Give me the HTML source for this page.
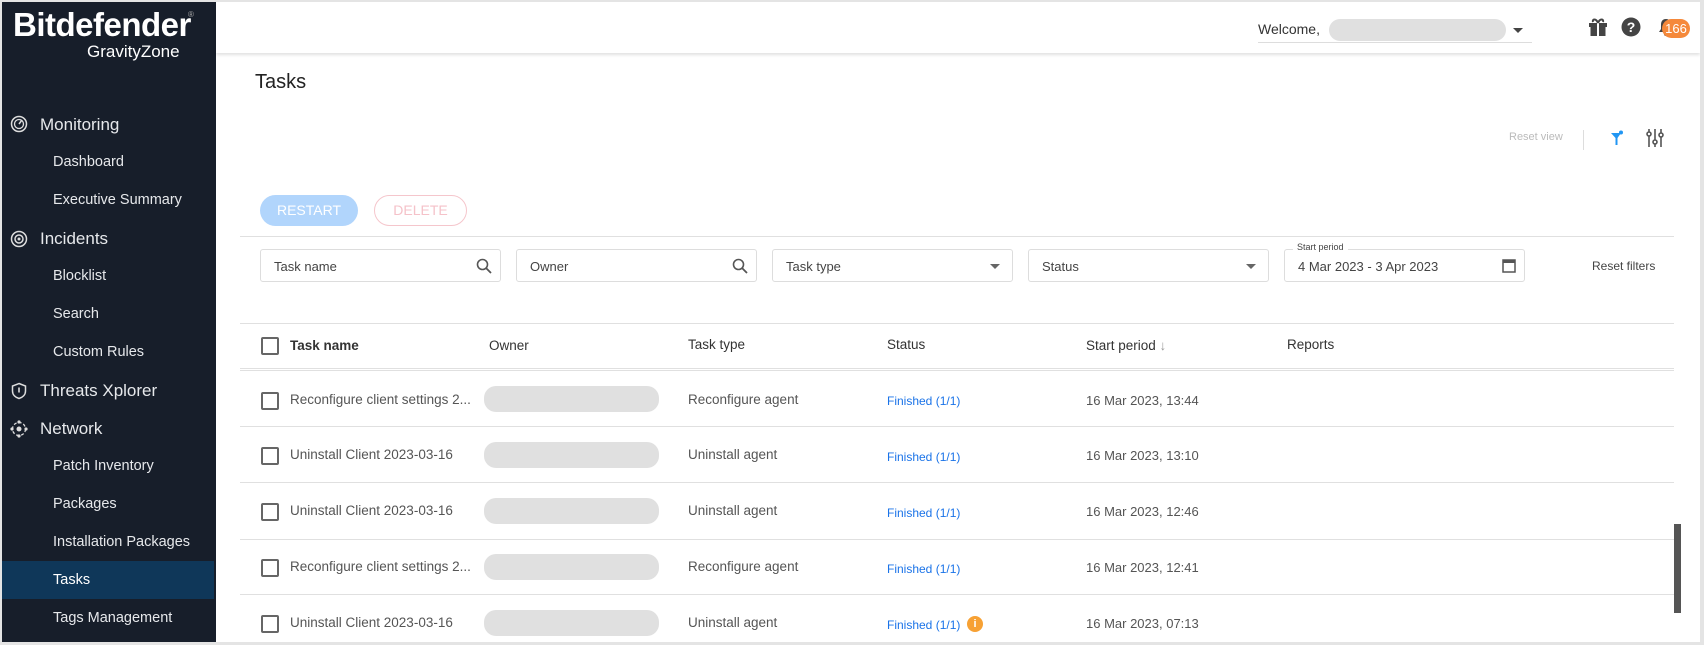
<!DOCTYPE html>
<html><head><meta charset="utf-8"><style>
*{box-sizing:border-box;margin:0;padding:0}
body{width:1704px;height:645px;overflow:hidden;background:#e4e4e4;font-family:"Liberation Sans",sans-serif;position:relative}
.frame{position:absolute;left:2px;top:2px;width:1698px;height:640px;background:#fff;overflow:hidden}
.side{position:absolute;left:0;top:0;width:214px;height:640px;background:#171e2a;color:#e6e8eb}
.abs{position:absolute}
.logo{left:11px;top:4px;font-size:33px;font-weight:bold;color:#fff;letter-spacing:-0.5px}
.gz{left:85px;top:40px;font-size:17px;color:#fff}
.sec{position:absolute;left:38px;font-size:17px;color:#e6e8eb}
.sub{position:absolute;left:51px;font-size:14.5px;color:#e6e8eb}
.ico{position:absolute;left:8px;width:18px;height:18px}
.hl{position:absolute;left:0;top:559px;width:212px;height:38px;background:#0f3759}
.top{position:absolute;left:214px;top:0;right:0;height:51px;background:#fff;box-shadow:0 2px 3px rgba(0,0,0,.12)}
.pill{position:absolute;background:#e0e0e0;border-radius:12px}
.inp{position:absolute;top:247px;height:33px;border:1px solid #ddd;border-radius:3px;font-size:13px;color:#444;padding:9px 13px}
.line{position:absolute;left:238px;width:1434px;height:1px;background:#e0e0e0}
.cb{position:absolute;left:259px;width:18px;height:18px;border:2px solid #666;border-radius:2px}
.cell{position:absolute;font-size:13.5px;color:#555}
.st{position:absolute;left:885px;font-size:12px;color:#1a73e8}
</style></head><body>
<div class="frame">
<div class="side">
 <div class="abs logo">Bitdefender</div><div class="abs" style="left:186px;top:8px;font-size:8px;color:#aaa">®</div>
 <div class="abs gz">GravityZone</div>
 <svg class="ico" style="top:113px" viewBox="0 0 18 18"><circle cx="9" cy="9" r="7.5" fill="none" stroke="#ddd" stroke-width="1.5"/><circle cx="9" cy="9" r="4.5" fill="none" stroke="#ddd" stroke-width="1.3"/><path d="M9 9L12 5" stroke="#ddd" stroke-width="1.5"/></svg>
 <div class="sec" style="top:113px">Monitoring</div>
 <div class="sub" style="top:152px">Dashboard</div>
 <div class="sub" style="top:190px">Executive Summary</div>
 <svg class="ico" style="top:228px" viewBox="0 0 18 18"><circle cx="9" cy="9" r="7.5" fill="none" stroke="#ddd" stroke-width="1.5"/><circle cx="9" cy="9" r="4" fill="none" stroke="#ddd" stroke-width="1.5"/><circle cx="9" cy="9" r="1.5" fill="#ddd"/></svg>
 <div class="sec" style="top:227px">Incidents</div>
 <div class="sub" style="top:266px">Blocklist</div>
 <div class="sub" style="top:304px">Search</div>
 <div class="sub" style="top:342px">Custom Rules</div>
 <svg class="ico" style="top:380px" viewBox="0 0 18 18"><path d="M9 1.5L15.5 4v5c0 4-3 6.5-6.5 7.5C5.5 15.5 2.5 13 2.5 9V4z" fill="none" stroke="#ddd" stroke-width="1.5"/><path d="M9 5.5v5" stroke="#ddd" stroke-width="1.6"/></svg>
 <div class="sec" style="top:379px">Threats Xplorer</div>
 <svg class="ico" style="top:418px" viewBox="0 0 18 18"><circle cx="9" cy="9" r="6.5" fill="none" stroke="#ddd" stroke-width="1.3" stroke-dasharray="3 2"/><circle cx="9" cy="9" r="2.5" fill="#ddd"/><circle cx="9" cy="2" r="1.6" fill="#ddd"/><circle cx="9" cy="16" r="1.6" fill="#ddd"/><circle cx="2" cy="9" r="1.6" fill="#ddd"/><circle cx="16" cy="9" r="1.6" fill="#ddd"/></svg>
 <div class="sec" style="top:417px">Network</div>
 <div class="sub" style="top:456px">Patch Inventory</div>
 <div class="sub" style="top:494px">Packages</div>
 <div class="sub" style="top:532px">Installation Packages</div>
 <div class="hl"></div>
 <div class="sub" style="top:570px;color:#fff">Tasks</div>
 <div class="sub" style="top:608px">Tags Management</div>
</div>
<div class="abs" style="left:208px;top:8px;width:18px;height:36px;background:#171e2a;border-radius:0 12px 12px 0;color:#fff;font-size:12px;text-align:center;line-height:34px">‹</div>
<div class="top">
 <div class="abs" style="left:1042px;top:19px;font-size:14px;color:#333">Welcome,</div>
 <div class="pill" style="left:1113px;top:17px;width:177px;height:22px;border-radius:11px"></div>
 <div class="abs" style="left:1297px;top:26px;width:0;height:0;border-left:5px solid transparent;border-right:5px solid transparent;border-top:5px solid #444"></div>
 <div class="abs" style="left:1042px;top:40px;width:274px;height:1px;background:#ddd"></div>
 <svg class="abs" style="left:1372px;top:15px" width="20" height="20" viewBox="0 0 20 20"><rect x="1" y="6" width="18" height="4" fill="#444"/><rect x="2.5" y="10" width="15" height="9" fill="#444"/><rect x="9" y="6" width="2" height="13" fill="#fff"/><path d="M10 6C8 1 4 2 5 5M10 6c2-5 6-4 5-1" stroke="#444" stroke-width="2" fill="none"/></svg>
 <svg class="abs" style="left:1405px;top:15px" width="20" height="20" viewBox="0 0 20 20"><circle cx="10" cy="10" r="9.5" fill="#444"/><text x="10" y="15" font-size="14" font-weight="bold" fill="#fff" text-anchor="middle" font-family="Liberation Sans">?</text></svg>
 <svg class="abs" style="left:1440px;top:15px" width="20" height="20" viewBox="0 0 20 20"><path d="M10 2c-4 0-5 3-5 6v4l-2 3h14l-2-3V8c0-3-1-6-5-6zM8 17h4a2 2 0 01-4 0z" fill="#444"/></svg>
 <div class="abs" style="left:1446px;top:17px;width:28px;height:19px;background:#f5893b;border-radius:10px;color:#fff;font-size:13px;text-align:center;line-height:19px">166</div>
</div>
<div class="abs" style="left:253px;top:69px;font-size:20px;color:#222">Tasks</div>
<div class="abs" style="left:1507px;top:129px;font-size:11px;color:#bbb">Reset view</div>
<div class="abs" style="left:1581px;top:128px;width:1px;height:20px;background:#ddd"></div>
<svg class="abs" style="left:1608px;top:128px" width="16" height="16" viewBox="0 0 16 16"><path d="M1 3h10l-3.5 5v7h-2V8z" fill="#2196f3"/><circle cx="11" cy="2.5" r="2" fill="#2196f3"/></svg>
<svg class="abs" style="left:1644px;top:126px" width="18" height="20" viewBox="0 0 18 20"><g stroke="#555" stroke-width="1.6" fill="#fff"><path d="M3 1v18M9 1v18M15 1v18"/><circle cx="3" cy="6" r="2"/><circle cx="9" cy="14" r="2"/><circle cx="15" cy="7" r="2"/></g></svg>
<div class="abs" style="left:258px;top:193px;width:98px;height:31px;background:#b1d5fc;border-radius:16px;color:#fff;font-size:14px;text-align:center;line-height:31px">RESTART</div>
<div class="abs" style="left:372px;top:193px;width:93px;height:31px;border:1px solid #f5c6cc;border-radius:16px;color:#f5c2c9;font-size:14px;text-align:center;line-height:29px">DELETE</div>
<div class="line" style="top:234px"></div>
<div class="inp" style="left:258px;width:241px">Task name<svg class="abs" style="right:8px;top:8px" width="16" height="16" viewBox="0 0 16 16"><circle cx="6.5" cy="6.5" r="5" fill="none" stroke="#555" stroke-width="1.6"/><path d="M10 10l5 5" stroke="#555" stroke-width="1.8"/></svg></div>
<div class="inp" style="left:514px;width:241px">Owner<svg class="abs" style="right:8px;top:8px" width="16" height="16" viewBox="0 0 16 16"><circle cx="6.5" cy="6.5" r="5" fill="none" stroke="#555" stroke-width="1.6"/><path d="M10 10l5 5" stroke="#555" stroke-width="1.8"/></svg></div>
<div class="inp" style="left:770px;width:241px">Task type<div class="abs" style="right:12px;top:14px;border-left:5px solid transparent;border-right:5px solid transparent;border-top:5px solid #666"></div></div>
<div class="inp" style="left:1026px;width:241px">Status<div class="abs" style="right:12px;top:14px;border-left:5px solid transparent;border-right:5px solid transparent;border-top:5px solid #666"></div></div>
<div class="inp" style="left:1282px;width:241px">4 Mar 2023 - 3 Apr 2023<svg class="abs" style="right:8px;top:8px" width="14" height="15" viewBox="0 0 14 15"><rect x="1" y="2" width="12" height="12" fill="none" stroke="#555" stroke-width="1.5"/><rect x="1" y="2" width="12" height="3" fill="#555"/></svg></div>
<div class="abs" style="left:1291px;top:240px;background:#fff;padding:0 4px;font-size:9px;color:#444">Start period</div>
<div class="abs" style="left:1590px;top:257px;font-size:12px;color:#444">Reset filters</div>
<div class="line" style="top:321px"></div>
<div class="cb" style="top:335px"></div>
<div class="cell" style="left:288px;top:336px;color:#333;font-weight:bold;font-size:13.5px">Task name</div>
<div class="cell" style="left:487px;top:336px;color:#333;font-size:13.5px">Owner</div>
<div class="cell" style="left:686px;top:335px;color:#333;font-size:13.5px">Task type</div>
<div class="cell" style="left:885px;top:335px;color:#333;font-size:13.5px">Status</div>
<div class="cell" style="left:1084px;top:336px;color:#333;font-size:13.5px">Start period <span style="color:#999">↓</span></div>
<div class="cell" style="left:1285px;top:335px;color:#333;font-size:13.5px">Reports</div>
<div class="line" style="top:366px"></div><div class="line" style="top:368px"></div>

<div class="cb" style="top:390px"></div><div class="cell" style="left:288px;top:390px">Reconfigure client settings 2...</div><div class="pill" style="left:482px;top:384px;width:175px;height:26px"></div><div class="cell" style="left:686px;top:390px">Reconfigure agent</div><div class="st" style="top:392px">Finished (1/1)</div><div class="cell" style="left:1084px;top:391px;font-size:13px">16 Mar 2023, 13:44</div>
<div class="line" style="top:424px"></div>
<div class="cb" style="top:445px"></div><div class="cell" style="left:288px;top:445px">Uninstall Client 2023-03-16</div><div class="pill" style="left:482px;top:440px;width:175px;height:26px"></div><div class="cell" style="left:686px;top:445px">Uninstall agent</div><div class="st" style="top:448px">Finished (1/1)</div><div class="cell" style="left:1084px;top:446px;font-size:13px">16 Mar 2023, 13:10</div>
<div class="line" style="top:480px"></div>
<div class="cb" style="top:501px"></div><div class="cell" style="left:288px;top:501px">Uninstall Client 2023-03-16</div><div class="pill" style="left:482px;top:496px;width:175px;height:26px"></div><div class="cell" style="left:686px;top:501px">Uninstall agent</div><div class="st" style="top:504px">Finished (1/1)</div><div class="cell" style="left:1084px;top:502px;font-size:13px">16 Mar 2023, 12:46</div>
<div class="line" style="top:537px"></div>
<div class="cb" style="top:557px"></div><div class="cell" style="left:288px;top:557px">Reconfigure client settings 2...</div><div class="pill" style="left:482px;top:552px;width:175px;height:26px"></div><div class="cell" style="left:686px;top:557px">Reconfigure agent</div><div class="st" style="top:560px">Finished (1/1)</div><div class="cell" style="left:1084px;top:558px;font-size:13px">16 Mar 2023, 12:41</div>
<div class="line" style="top:592px"></div>
<div class="cb" style="top:613px"></div><div class="cell" style="left:288px;top:613px">Uninstall Client 2023-03-16</div><div class="pill" style="left:482px;top:608px;width:175px;height:26px"></div><div class="cell" style="left:686px;top:613px">Uninstall agent</div><div class="st" style="top:616px">Finished (1/1)</div>
<div class="abs" style="left:965px;top:614px;width:16px;height:16px;border-radius:8px;background:#f7a134;color:#fff;font-size:11px;text-align:center;line-height:16px;font-weight:bold">i</div>
<div class="cell" style="left:1084px;top:614px;font-size:13px">16 Mar 2023, 07:13</div>
<div class="abs" style="left:1672px;top:522px;width:7px;height:89px;background:#555"></div>
</div>
</body></html>
